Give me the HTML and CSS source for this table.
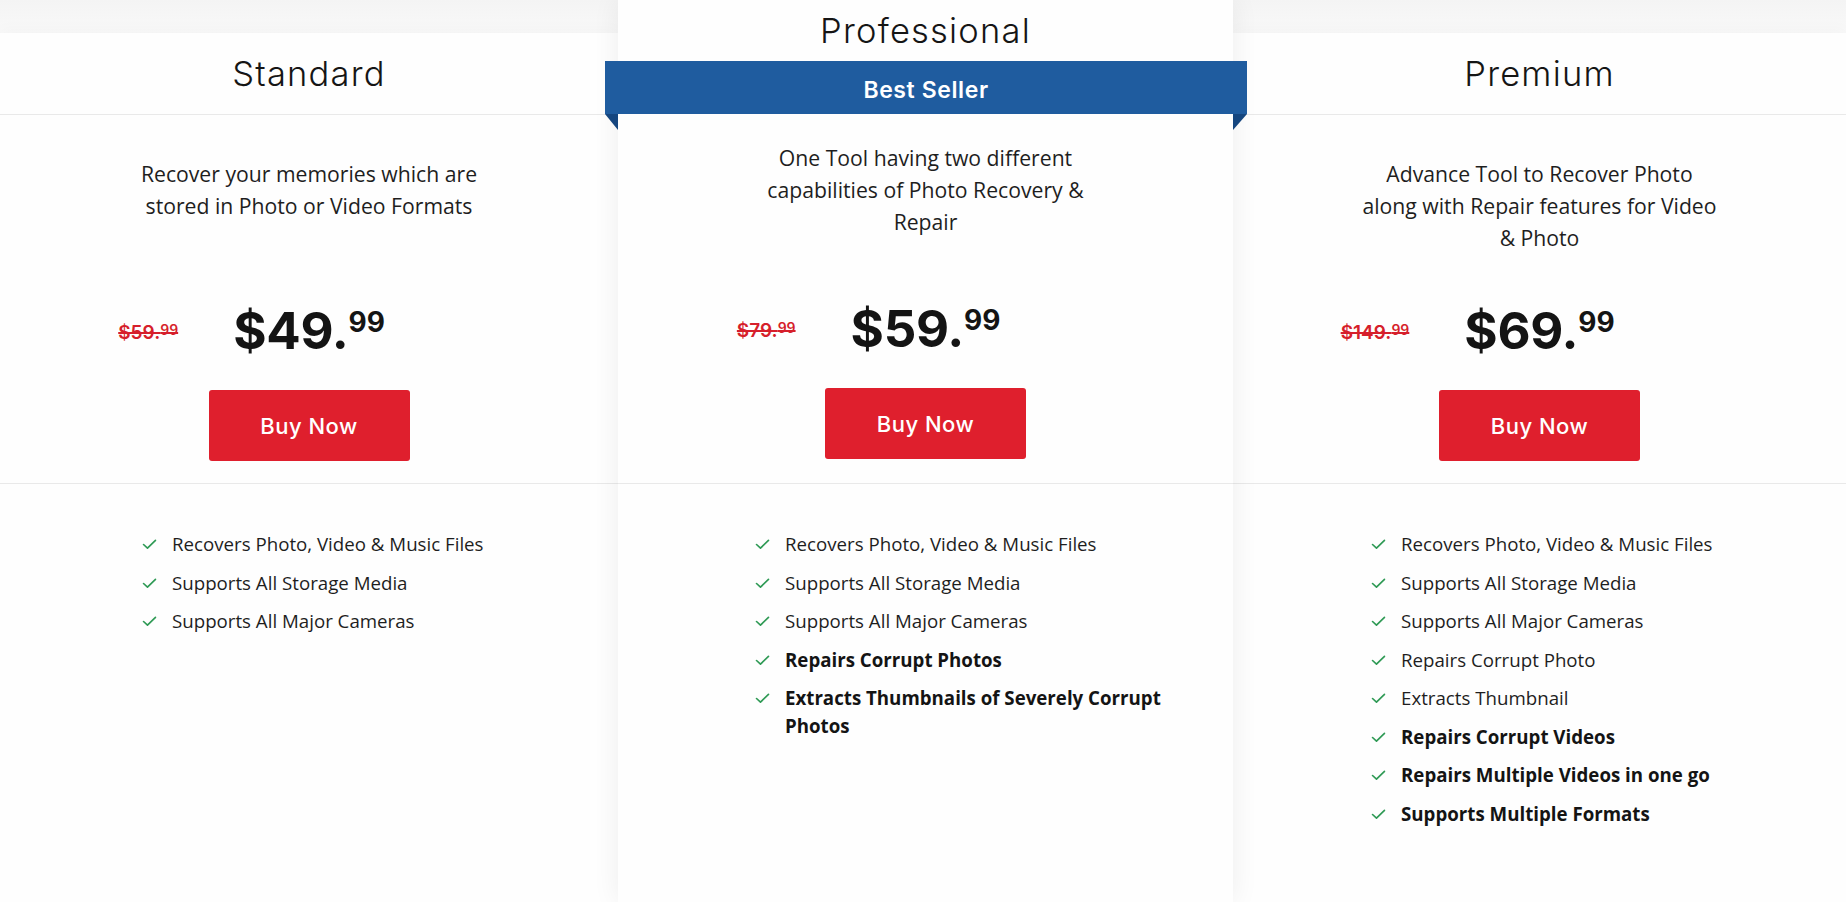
FILE: index.html
```html
<!DOCTYPE html>
<html lang="en">
<head>
<meta charset="utf-8">
<title>Pricing</title>
<link rel="stylesheet" href="styles.css">
</head>
<body>
<main class="plans">
  <section class="card card--side">
    <header class="card-head"><h2 class="plan-name">Standard</h2></header>
    <div class="card-body">
      <p class="desc">Recover your memories which are<br>stored in Photo or Video Formats</p>
      <div class="price-row">
        <span class="old-price">$59.<sup>99</sup></span>
        <span class="price">$49.<sup>99</sup></span>
      </div>
      <a class="buy" href="#">Buy Now</a>
    </div>
    <ul class="features">
      <li><svg class="check" viewBox="0 0 16 12"><path d="M1.5 6 L5.8 10 L14.5 1.5"/></svg><span>Recovers Photo, Video &amp; Music Files</span></li>
      <li><svg class="check" viewBox="0 0 16 12"><path d="M1.5 6 L5.8 10 L14.5 1.5"/></svg><span>Supports All Storage Media</span></li>
      <li><svg class="check" viewBox="0 0 16 12"><path d="M1.5 6 L5.8 10 L14.5 1.5"/></svg><span>Supports All Major Cameras</span></li>
    </ul>
  </section>

  <section class="card card--featured">
    <header class="card-head"><h2 class="plan-name">Professional</h2></header>
    <div class="ribbon">Best Seller</div>
    <div class="card-body">
      <p class="desc">One Tool having two different<br>capabilities of Photo Recovery &amp;<br>Repair</p>
      <div class="price-row">
        <span class="old-price">$79.<sup>99</sup></span>
        <span class="price">$59.<sup>99</sup></span>
      </div>
      <a class="buy" href="#">Buy Now</a>
    </div>
    <ul class="features">
      <li><svg class="check" viewBox="0 0 16 12"><path d="M1.5 6 L5.8 10 L14.5 1.5"/></svg><span>Recovers Photo, Video &amp; Music Files</span></li>
      <li><svg class="check" viewBox="0 0 16 12"><path d="M1.5 6 L5.8 10 L14.5 1.5"/></svg><span>Supports All Storage Media</span></li>
      <li><svg class="check" viewBox="0 0 16 12"><path d="M1.5 6 L5.8 10 L14.5 1.5"/></svg><span>Supports All Major Cameras</span></li>
      <li class="strong"><svg class="check" viewBox="0 0 16 12"><path d="M1.5 6 L5.8 10 L14.5 1.5"/></svg><span>Repairs Corrupt Photos</span></li>
      <li class="strong"><svg class="check" viewBox="0 0 16 12"><path d="M1.5 6 L5.8 10 L14.5 1.5"/></svg><span>Extracts Thumbnails of Severely Corrupt Photos</span></li>
    </ul>
  </section>

  <section class="card card--side">
    <header class="card-head"><h2 class="plan-name">Premium</h2></header>
    <div class="card-body">
      <p class="desc">Advance Tool to Recover Photo<br>along with Repair features for Video<br>&amp; Photo</p>
      <div class="price-row">
        <span class="old-price">$149.<sup>99</sup></span>
        <span class="price">$69.<sup>99</sup></span>
      </div>
      <a class="buy" href="#">Buy Now</a>
    </div>
    <ul class="features">
      <li><svg class="check" viewBox="0 0 16 12"><path d="M1.5 6 L5.8 10 L14.5 1.5"/></svg><span>Recovers Photo, Video &amp; Music Files</span></li>
      <li><svg class="check" viewBox="0 0 16 12"><path d="M1.5 6 L5.8 10 L14.5 1.5"/></svg><span>Supports All Storage Media</span></li>
      <li><svg class="check" viewBox="0 0 16 12"><path d="M1.5 6 L5.8 10 L14.5 1.5"/></svg><span>Supports All Major Cameras</span></li>
      <li><svg class="check" viewBox="0 0 16 12"><path d="M1.5 6 L5.8 10 L14.5 1.5"/></svg><span>Repairs Corrupt Photo</span></li>
      <li><svg class="check" viewBox="0 0 16 12"><path d="M1.5 6 L5.8 10 L14.5 1.5"/></svg><span>Extracts Thumbnail</span></li>
      <li class="strong"><svg class="check" viewBox="0 0 16 12"><path d="M1.5 6 L5.8 10 L14.5 1.5"/></svg><span>Repairs Corrupt Videos</span></li>
      <li class="strong"><svg class="check" viewBox="0 0 16 12"><path d="M1.5 6 L5.8 10 L14.5 1.5"/></svg><span>Repairs Multiple Videos in one go</span></li>
      <li class="strong"><svg class="check" viewBox="0 0 16 12"><path d="M1.5 6 L5.8 10 L14.5 1.5"/></svg><span>Supports Multiple Formats</span></li>
    </ul>
  </section>
</main>
</body>
</html>
```
FILE: styles.css
```css
* { box-sizing: border-box; }

html, body {
  margin: 0;
  padding: 0;
  height: 100%;
}

body {
  background: linear-gradient(#f4f4f4, #fafafa 40px, #fafafa);
  font-family: "Open Sans", "Liberation Sans", sans-serif;
  color: #1e1e1e;
  overflow: hidden;
}

.plans {
  display: grid;
  grid-template-columns: 618px 615px 613px;
  height: 902px;
}

.card {
  background: #fefefe;
  display: flex;
  flex-direction: column;
}

.card--side {
  margin-top: 33px;
  box-shadow: 0 -4px 14px rgba(0, 0, 0, 0.025);
}

.card--featured {
  position: relative;
  z-index: 2;
  box-shadow: 0 0 26px rgba(0, 0, 0, 0.07);
}

.card-head {
  height: 82px;
  display: flex;
  align-items: center;
  justify-content: center;
  border-bottom: 1px solid #e9e9e9;
}

.card--featured .card-head {
  height: 61px;
  border-bottom: none;
  padding-bottom: 0;
}

.plan-name {
  margin: 0;
  font-family: Inter, "Liberation Sans", sans-serif;
  font-weight: 300;
  font-size: 34.5px;
  letter-spacing: 1.2px;
  color: #151515;
}

.ribbon {
  position: relative;
  margin: 0 -14px 0 -13px;
  height: 53px;
  background: #1f5c9f;
  color: #fff;
  font-family: Inter, "Liberation Sans", sans-serif;
  font-weight: 600;
  font-size: 23px;
  letter-spacing: 0.6px;
  display: flex;
  align-items: center;
  justify-content: center;
  padding-top: 5px;
}

.ribbon::before,
.ribbon::after {
  content: "";
  position: absolute;
  top: 100%;
  width: 0;
  height: 0;
  border-top: 16px solid #15467f;
}

.ribbon::before {
  left: 0;
  border-left: 13px solid transparent;
}

.ribbon::after {
  right: 0;
  border-right: 14px solid transparent;
}

.card-body {
  display: flex;
  flex-direction: column;
  align-items: center;
  padding: 43px 0 22px;
  border-bottom: 1px solid #e9e9e9;
}

.card--featured .card-body {
  padding: 28px 0 24px;
}

.desc {
  margin: 0;
  height: 147px;
  font-size: 21.2px;
  line-height: 32px;
  text-align: center;
  color: #1e1e1e;
}

.card--featured .desc {
  height: 161px;
}

.price-row {
  width: 100%;
  display: grid;
  grid-template-columns: 1fr auto 1fr;
  align-items: start;
  height: 52px;
  font-family: Inter, "Liberation Sans", sans-serif;
}

.old-price {
  grid-column: 1;
  justify-self: end;
  margin: 18px 55px 0 0;
  font-size: 19px;
  font-weight: 600;
  line-height: 1;
  color: #d61f2b;
  text-decoration: line-through;
  text-decoration-thickness: 1.5px;
}

.old-price sup {
  font-size: 14px;
  vertical-align: top;
  line-height: 1;
}

.price {
  grid-column: 2;
  font-size: 51px;
  font-weight: 700;
  line-height: 1;
  color: #141414;
  letter-spacing: -0.3px;
}

.price sup {
  display: inline-block;
  font-size: 28px;
  line-height: 1;
  vertical-align: top;
  padding-top: 3px;
  letter-spacing: 0;
}

.buy {
  margin-top: 33px;
  width: 201px;
  height: 71px;
  display: flex;
  align-items: center;
  justify-content: center;
  background: #df1f2d;
  border-radius: 3px;
  color: #fff;
  text-decoration: none;
  font-family: Inter, "Liberation Sans", sans-serif;
  font-weight: 500;
  font-size: 22px;
  letter-spacing: 0.5px;
}

.features {
  list-style: none;
  margin: 0;
  padding: 46px 40px 0 142px;
  display: flex;
  flex-direction: column;
  gap: 10.5px;
}

.card--featured .features {
  padding-left: 137px;
}

.card--side:last-child .features {
  padding-left: 138px;
}

.features li {
  display: flex;
  align-items: flex-start;
  font-size: 18.7px;
  line-height: 28px;
  color: #1e1e1e;
}

.features li.strong {
  font-weight: 700;
  color: #141414;
}

.check {
  flex: none;
  width: 15px;
  height: 11px;
  margin: 9px 15px 0 0;
  fill: none;
  stroke: #2f9a55;
  stroke-width: 1.8;
  stroke-linecap: round;
  stroke-linejoin: round;
}
```
